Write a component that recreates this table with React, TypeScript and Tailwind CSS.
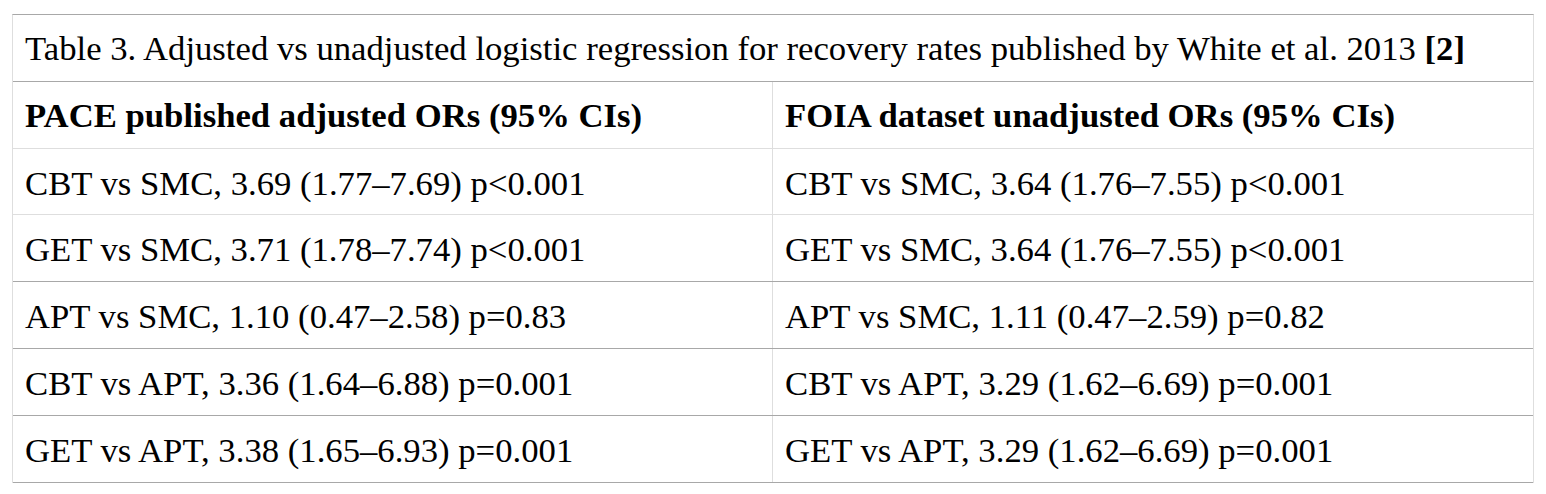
import React from "react";

const rows = [
  {
    left: "CBT vs SMC, 3.69 (1.77–7.69) p<0.001",
    right: "CBT vs SMC, 3.64 (1.76–7.55) p<0.001",
    line: "border-[#dedede]",
    h: "h-[66px]",
  },
  {
    left: "GET vs SMC, 3.71 (1.78–7.74) p<0.001",
    right: "GET vs SMC, 3.64 (1.76–7.55) p<0.001",
    line: "border-[#a8a8a8]",
    h: "h-[67px]",
  },
  {
    left: "APT vs SMC, 1.10 (0.47–2.58) p=0.83",
    right: "APT vs SMC, 1.11 (0.47–2.59) p=0.82",
    line: "border-[#a8a8a8]",
    h: "h-[67px]",
  },
  {
    left: "CBT vs APT, 3.36 (1.64–6.88) p=0.001",
    right: "CBT vs APT, 3.29 (1.62–6.69) p=0.001",
    line: "border-[#a8a8a8]",
    h: "h-[67px]",
  },
  {
    left: "GET vs APT, 3.38 (1.65–6.93) p=0.001",
    right: "GET vs APT, 3.29 (1.62–6.69) p=0.001",
    line: "border-[#a8a8a8]",
    h: "h-[67px]",
  },
];

export default function App() {
  return (
    <div className="min-h-screen bg-white pt-[14px] pl-[12px] font-['Liberation_Serif','Times_New_Roman',serif] text-[34.7px] leading-[40px] text-black">
      <div className="w-[1522px] border-x border-t border-x-[#dedede] border-t-[#a8a8a8]">
        <div className="flex h-[67px] items-center border-b border-[#a8a8a8] px-[12px] pt-[2px]">
          <p className="whitespace-nowrap">
            Table 3. Adjusted vs unadjusted logistic regression for recovery
            rates published by White et al. 2013 <b>[2]</b>
          </p>
        </div>

        <div className="grid h-[67px] grid-cols-[759px_1fr] border-b border-[#dedede] font-bold">
          <div className="flex items-center whitespace-nowrap px-[12px] pt-[2px]">
            PACE published adjusted ORs (95% CIs)
          </div>
          <div className="flex items-center whitespace-nowrap border-l border-[#dedede] px-[12px] pt-[2px]">
            FOIA dataset unadjusted ORs (95% CIs)
          </div>
        </div>

        {rows.map((row, i) => (
          <div
            key={i}
            className={`grid grid-cols-[759px_1fr] border-b ${row.line} ${row.h}`}
          >
            <div className="flex items-center whitespace-nowrap px-[12px] pt-[4px]">
              {row.left}
            </div>
            <div className="flex items-center whitespace-nowrap border-l border-[#dedede] px-[12px] pt-[4px]">
              {row.right}
            </div>
          </div>
        ))}
      </div>
    </div>
  );
}
